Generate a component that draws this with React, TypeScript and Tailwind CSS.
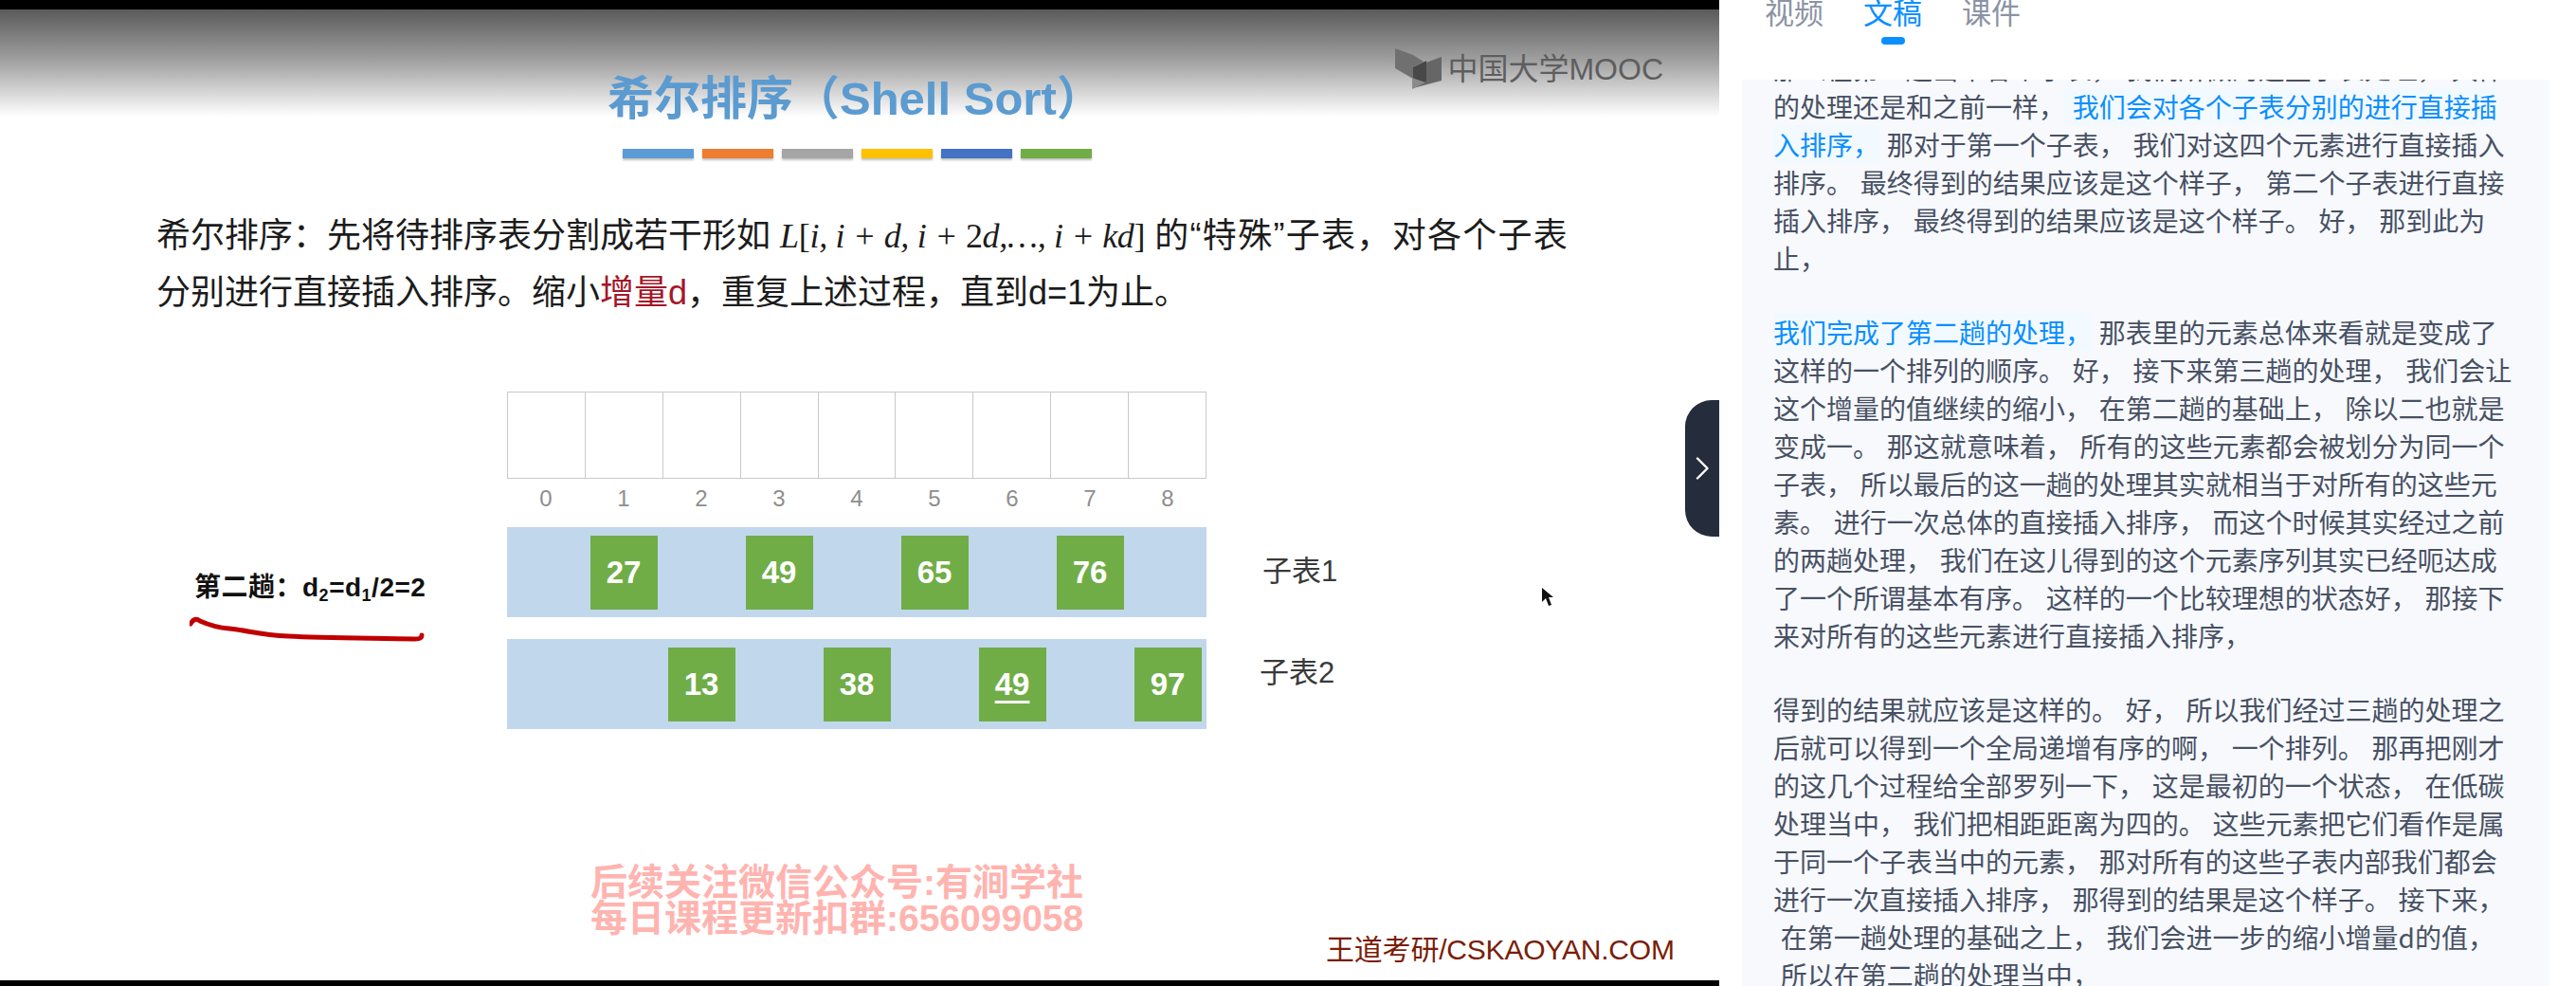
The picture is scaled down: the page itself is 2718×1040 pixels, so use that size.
const slideFont = "font-['Liberation_Sans','Noto_Sans_CJK_SC',sans-serif]";

const stripes = ['bg-[#5b9bd5]', 'bg-[#ed7d31]', 'bg-[#a5a5a5]', 'bg-[#ffc000]', 'bg-[#4472c4]', 'bg-[#70ad47]'];

// one entry per index 0-8, '' means the cell is empty
const subTable1 = ['', '27', '', '49', '', '65', '', '76', ''];
const subTable2 = ['', '', '13', '', '38', '', '49', '', '97'];

type Line = { text: string; hl?: string; rest?: string };

const transcript: Line[][] = [
  [
    { text: '那么在第二趟当中各个子表， 我们所做的这些子表处理， 具体' },
    { text: '的处理还是和之前一样，', hl: ' 我们会对各个子表分别的进行直接插' },
    { text: '', hl: '入排序，', rest: ' 那对于第一个子表， 我们对这四个元素进行直接插入' },
    { text: '排序。 最终得到的结果应该是这个样子， 第二个子表进行直接' },
    { text: '插入排序， 最终得到的结果应该是这个样子。 好， 那到此为' },
    { text: '止，' },
  ],
  [
    { text: '', hl: '我们完成了第二趟的处理，', rest: ' 那表里的元素总体来看就是变成了' },
    { text: '这样的一个排列的顺序。 好， 接下来第三趟的处理， 我们会让' },
    { text: '这个增量的值继续的缩小， 在第二趟的基础上， 除以二也就是' },
    { text: '变成一。 那这就意味着， 所有的这些元素都会被划分为同一个' },
    { text: '子表， 所以最后的这一趟的处理其实就相当于对所有的这些元' },
    { text: '素。 进行一次总体的直接插入排序， 而这个时候其实经过之前' },
    { text: '的两趟处理， 我们在这儿得到的这个元素序列其实已经呃达成' },
    { text: '了一个所谓基本有序。 这样的一个比较理想的状态好， 那接下' },
    { text: '来对所有的这些元素进行直接插入排序，' },
  ],
  [
    { text: '得到的结果就应该是这样的。 好， 所以我们经过三趟的处理之' },
    { text: '后就可以得到一个全局递增有序的啊， 一个排列。 那再把刚才' },
    { text: '的这几个过程给全部罗列一下， 这是最初的一个状态， 在低碳' },
    { text: '处理当中， 我们把相距距离为四的。 这些元素把它们看作是属' },
    { text: '于同一个子表当中的元素， 那对所有的这些子表内部我们都会' },
    { text: '进行一次直接插入排序， 那得到的结果是这个样子。 接下来，' },
    { text: ' 在第一趟处理的基础之上， 我们会进一步的缩小增量d的值，' },
    { text: ' 所以在第二趟的处理当中，' },
  ],
];

export default function App() {
  return (
    <div className="flex h-[1040px] w-[2718px] overflow-hidden bg-white">
      <VideoPane />
      <SidePanel />
    </div>
  );
}

function VideoPane() {
  return (
    <div className="relative h-full w-[1814px] shrink-0 bg-black pt-[10px] pb-[6px]">
      <div
        className={`h-full w-full overflow-hidden bg-white bg-[linear-gradient(to_bottom,#5a5a5a_0px,#a2a2a2_55px,#ffffff_113px)] ${slideFont}`}
      >
        <SlideHeader />
        <p className="mt-[52px] pl-[165px] text-[36px] leading-[60px] whitespace-pre text-[#1c1c1c]">
          希尔排序：先将待排序表分割成若干形如{' '}
          <span className="font-['Liberation_Serif',serif] tracking-[-0.3px] italic">
            L<span className="not-italic">[</span>i, i + d, i + <span className="not-italic">2</span>d,…, i + kd<span className="not-italic">]</span>
          </span>{' '}
          <span className="tracking-[1.3px]">的“特殊”子表，对各个子表</span>
          <br />
          分别进行直接插入排序。缩小<span className="text-[#a3172a]">增量d</span>，重复上述过程，直到d=1为止。
        </p>
        <Diagram />
        <p className="mt-[143px] pl-[623px] text-[39px] leading-[38px] font-bold whitespace-pre text-[#ffb4b0]">
          后续关注微信公众号:有涧学社
          <br />
          每日课程更新扣群:656099058
        </p>
        <p className="-mt-[6px] pl-[1399px] text-[30px] leading-[40px] tracking-[-0.2px] whitespace-pre text-[#7a1d08]">
          王道考研/CSKAOYAN.COM
        </p>
      </div>

      {/* collapse handle */}
      <div className="absolute top-[422px] left-[1778px] flex h-[144px] w-[36px] items-center justify-center rounded-l-[28px] bg-[#252c3b]">
        <svg width="15" height="24" viewBox="0 0 15 24" fill="none">
          <path d="M2 1.5 12.5 12 2 22.5" stroke="#ffffff" strokeWidth="2.4" strokeLinecap="round" strokeLinejoin="round" />
        </svg>
      </div>

      {/* mouse pointer in the recording */}
      <svg className="absolute top-[619px] left-[1626px]" width="13" height="22" viewBox="0 0 13 22">
        <path d="M1 1v15l4-4 3 8 3-1-3-8h5z" fill="#111111" />
      </svg>
    </div>
  );
}

function SlideHeader() {
  return (
    <div className="flex items-start">
      <div className="ml-[641px] flex flex-col">
        <h1 className="mt-[64px] text-[49px] leading-[60px] font-bold whitespace-pre text-[#5b9bd0]">
          希尔排序（Shell Sort）
        </h1>
        <div className="mt-[23px] ml-[16px] flex gap-[9px]">
          {stripes.map((color) => (
            <div key={color} className={`h-[10px] w-[75px] shadow-[0_2px_2px_rgba(0,0,0,0.25)] ${color}`} />
          ))}
        </div>
      </div>
      <div className="mt-[41px] mr-[59px] ml-auto flex items-center gap-[5px]">
        <MoocLogo />
        <span className="text-[32px] leading-[36px] whitespace-pre text-[#5e5e5e]">中国大学MOOC</span>
      </div>
    </div>
  );
}

function MoocLogo() {
  return (
    <svg width="50" height="44" viewBox="14 13 50 44">
      <path d="M14 13 33 20 44 27 33 33 33 45 14 34z" fill="#707070" />
      <path d="M63 22V47L33 55V33z" fill="#666666" />
      <path d="M33 33 47 26V48L33 52z" fill="#484848" />
      <path d="M32 44 46 49 32 56z" fill="#8a8a8a" />
    </svg>
  );
}

function Diagram() {
  return (
    <div className="mt-[74px] flex">
      <div className="w-[535px] shrink-0 pl-[200px]">
        <div className="mt-[189px] pl-[5px] text-[28px] leading-[36px] font-bold tracking-[0.5px] whitespace-pre text-[#111111]">
          第二趟：d<sub className="text-[18px] leading-none">2</sub>=d<sub className="text-[18px] leading-none">1</sub>/2=2
        </div>
        <svg className="mt-[11px]" width="250" height="30" viewBox="0 0 250 30" fill="none">
          <path
            d="M1 9C4 4 7 3 11 6 20 10 28 13 42 14 62 16 75 21 104 22 140 24 190 24 238 25 243 25 245 24 245 21"
            stroke="#c00000"
            strokeWidth="5"
            strokeLinecap="round"
          />
        </svg>
      </div>

      <div className="w-[738px] shrink-0">
        <div className="grid h-[92px] grid-cols-9 border-t border-l border-[#c9c9c9]">
          {subTable1.map((_, i) => (
            <div key={i} className="border-r border-b border-[#c9c9c9]" />
          ))}
        </div>
        <div className="grid h-[51px] grid-cols-9 items-center pb-[10px]">
          {subTable1.map((_, i) => (
            <div key={i} className="text-center text-[24px] leading-[30px] text-[#8e8e8e]">
              {i}
            </div>
          ))}
        </div>
        <SubTableRow values={subTable1} />
        <div className="h-[23px]" />
        <SubTableRow values={subTable2} underlined={6} />
      </div>

      <div className="ml-[59px] flex flex-col text-[31px] leading-[40px] whitespace-pre text-[#3a3a3a]">
        <div className="mt-[170px]">子表1</div>
        <div className="mt-[67px] -ml-[3px]">子表2</div>
      </div>
    </div>
  );
}

function SubTableRow({ values, underlined }: { values: string[]; underlined?: number }) {
  return (
    <div className="grid h-[95px] grid-cols-9 items-center bg-[#c1d7ec]">
      {values.map((value, i) => (
        <div key={i} className="flex justify-center">
          {value && (
            <div className="flex h-[78px] w-[71px] items-center justify-center bg-[#70ad47] text-[33px] font-semibold text-white">
              <span className={i === underlined ? 'underline underline-offset-[6px]' : ''}>{value}</span>
            </div>
          )}
        </div>
      ))}
    </div>
  );
}

function SidePanel() {
  return (
    <div className="flex h-full w-[904px] shrink-0 flex-col font-['Noto_Sans_CJK_SC',sans-serif]">
      <div className="flex h-[84px] shrink-0 gap-[42px] overflow-hidden pl-[48px]">
        <Tab label="视频" />
        <Tab label="文稿" active />
        <Tab label="课件" />
      </div>
      <div className="ml-[24px] w-[852px] flex-1 overflow-hidden bg-[#f7f9fd] pl-[33px]">
        <div className="-mt-[32px] text-[28px] leading-[40px] [word-spacing:1.5px] whitespace-pre text-[#485164]">
          {transcript.map((para, p) => (
            <div key={p} className="mb-[38px]">
              {para.map((line, l) => (
                <div key={l}>
                  {line.text}
                  {line.hl && <span className="bg-[#f3faff] text-[#0a8fff]">{line.hl}</span>}
                  {line.rest}
                </div>
              ))}
            </div>
          ))}
        </div>
      </div>
    </div>
  );
}

function Tab({ label, active }: { label: string; active?: boolean }) {
  return (
    <div className="-mt-[10px] flex flex-col items-center">
      <span className={`text-[31px] leading-[44px] ${active ? 'text-[#0a8fff]' : 'text-[#8b93a5]'}`}>{label}</span>
      {active && <div className="mt-[5px] h-[8px] w-[25px] rounded-full bg-[#0a8fff]" />}
    </div>
  );
}
